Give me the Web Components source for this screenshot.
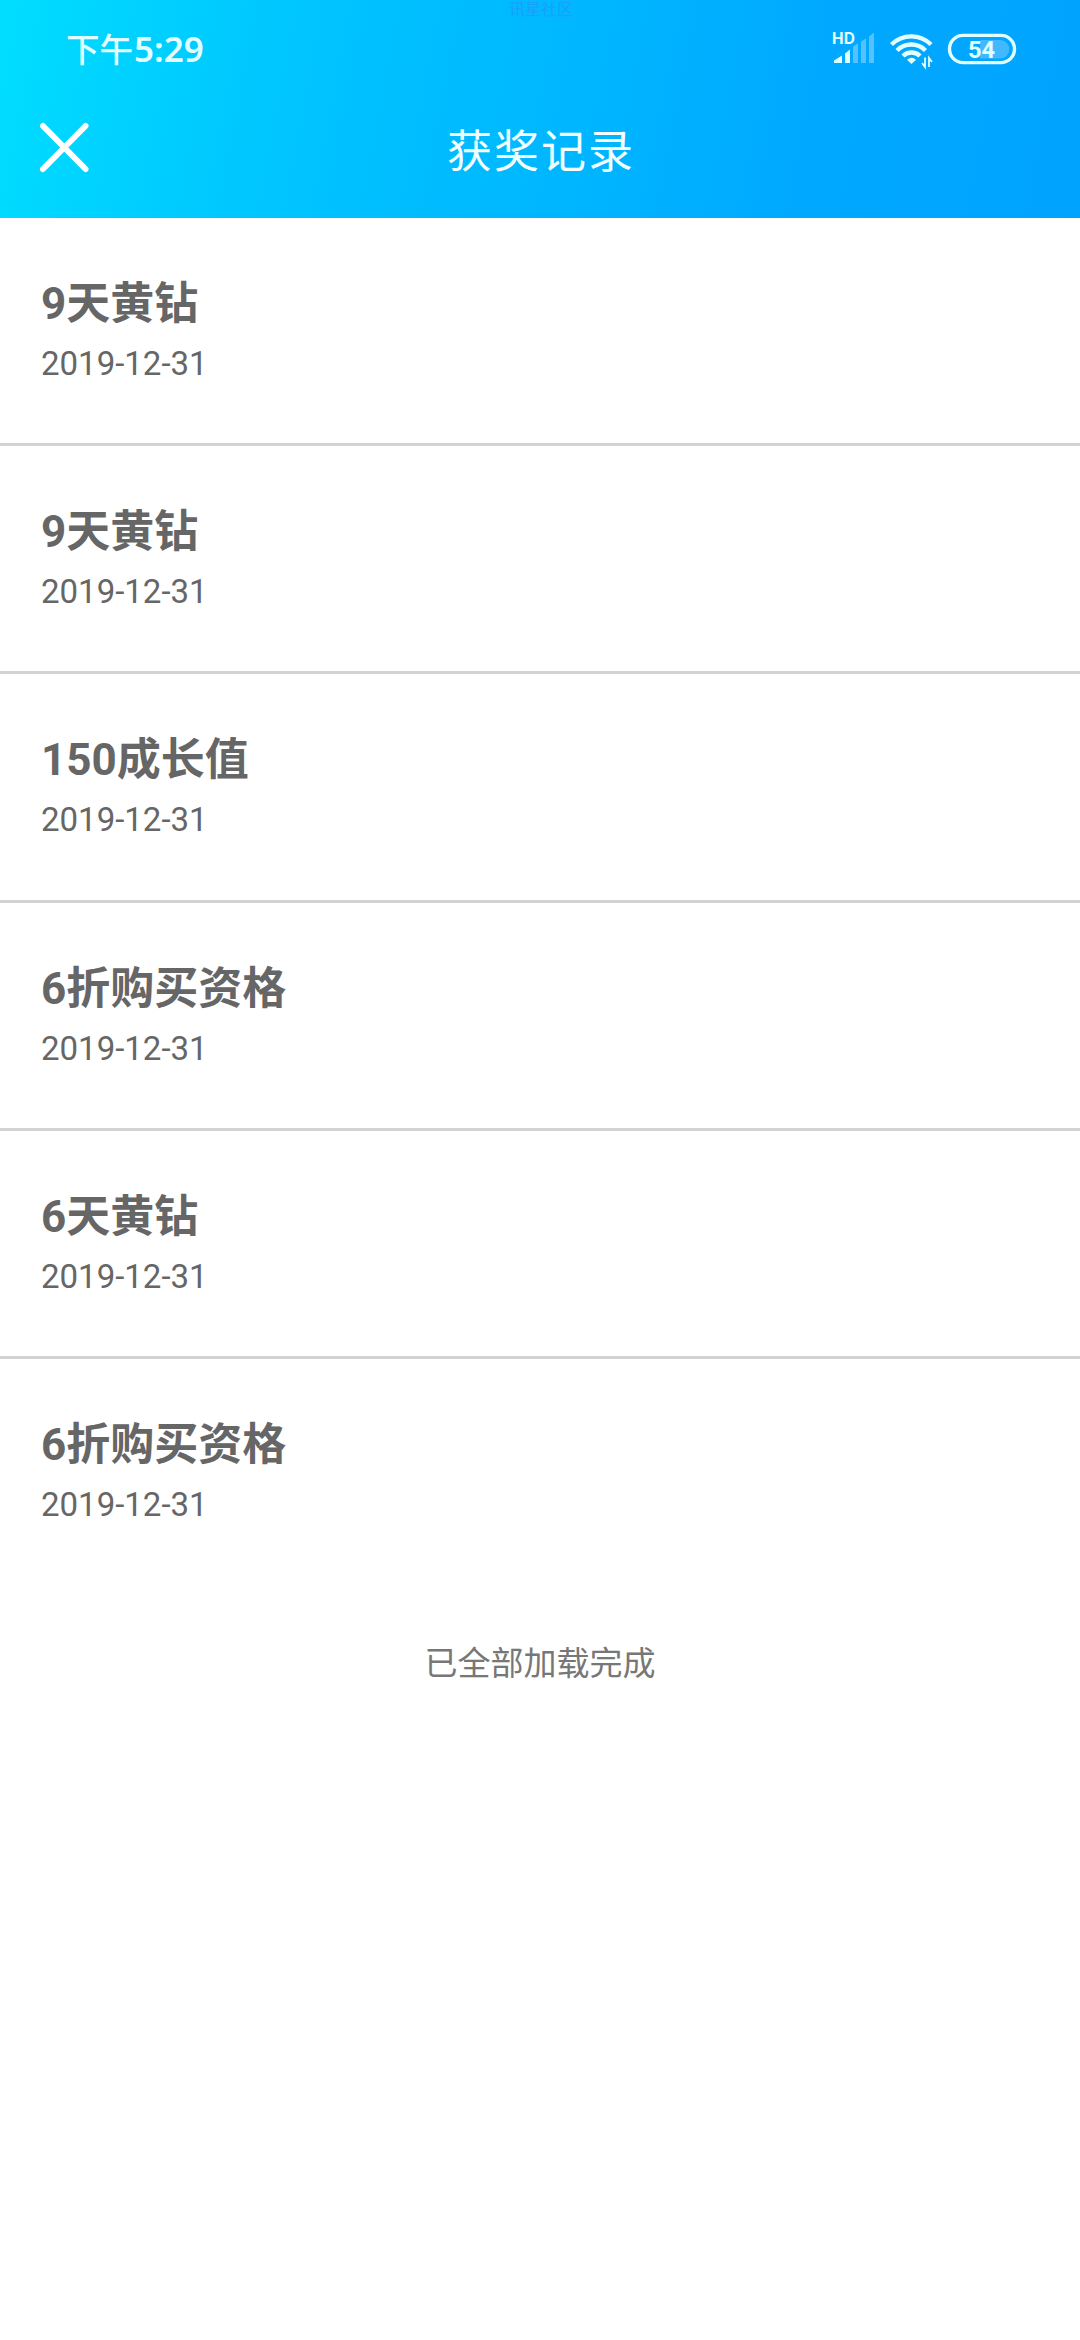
<!DOCTYPE html>
<html lang="zh-CN"><head><meta charset="utf-8"><title>获奖记录</title>
<style>
html,body{margin:0;background:#fff}
body{width:1080px;min-height:2340px;font-family:Roboto,"Noto Sans CJK SC",sans-serif}
</style></head><body>
<award-page></award-page>
<script>
const define=(name,html)=>customElements.define(name,class extends HTMLElement{
  constructor(){super();this.attachShadow({mode:'open'}).innerHTML=html;}
});
define('status-bar',`<style>
:host{display:flex;height:98px;box-sizing:border-box;padding:0 62px 0 66px;align-items:center;justify-content:space-between;color:#e2ffff}
time{font:500 33.500px/40px "Noto Sans CJK SC",sans-serif;white-space:nowrap;margin-top:-1px}
time b{font:600 35px/40px "Noto Sans","Noto Sans CJK SC",sans-serif;margin-left:1px}
svg{display:block}
</style>
<time>下午<b>5:29</b></time>
<svg width="190" height="44" viewBox="828 27 190 44">
<text x="832" y="44" font-family="Inter,sans-serif" font-weight="700" font-size="15.5" fill="#e2ffff" textLength="23">HD</text>
<path d="M834 63v-2.500l8-5V63zM845 63v-9.500l5-4V63z" fill="#e2ffff"/>
<path d="M853 63V46.500l5-3V63zM861 63V41.500l5-3V63zM869 63V36.500l5-4V63z" fill="#55c2ff"/>
<g fill="none" stroke="#e2ffff" stroke-width="4.400"><path d="M891.500 44.500a28 28 0 0 1 39.500 0M897 50.500a20 20 0 0 1 28.500 0M903 56a12 12 0 0 1 17 0"/></g>
<path d="M911.500 64l-4.500-4.200q4.500-4 9 0z" fill="#e2ffff"/>
<path d="M925 57.500V67l-3-4M929 67V58l3 4" fill="none" stroke="#e2ffff" stroke-width="1.800"/>
<path d="M980 40h20a9.300 9.300 0 0 1 0 18.600h-20z" fill="#42b9ff"/>
<rect x="949.500" y="35.400" width="65" height="27.200" rx="13.600" fill="none" stroke="#e2ffff" stroke-width="3.400"/>
<text x="981.500" y="58" text-anchor="middle" font-family="Roboto,sans-serif" font-weight="700" font-size="24.500" fill="#e2ffff" textLength="27" lengthAdjust="spacingAndGlyphs">54</text>
</svg>`);
define('nav-bar',`<style>
:host{display:grid;grid-template-columns:130px 1fr 130px;height:120px;align-items:center}
svg{display:block;margin:-23px 0 0 36px}
h1{margin:-18px 0 0;text-align:center;font:400 45px/60px "Noto Sans CJK SC",sans-serif;letter-spacing:2px;padding-left:2px;color:#f2ffff}
</style>
<svg width="56" height="56" viewBox="36 119 56 56"><path d="M43 126l42.500 43M85.500 126L43 169" stroke="#fff" stroke-width="6" stroke-linecap="round"/></svg>
<h1><slot></slot></h1>`);
define('app-header',`<style>
:host{display:block;position:relative;height:218px;background:linear-gradient(101deg,#00deff 0%,#00cfff 15%,#00c1ff 33%,#00b6ff 54%,#00a8ff 76%,#00a4ff 100%)}
.mark{position:absolute;left:509px;top:-1px;font:400 16px/18px "Noto Sans CJK SC",sans-serif;color:#18a0fa;white-space:nowrap}
</style><span class="mark">讯星社区</span><status-bar></status-bar><nav-bar>获奖记录</nav-bar>`);
define('award-item',`<style>
:host{display:flex;flex-direction:column;height:228.200px;box-sizing:border-box;padding:55px 41px 0;border-bottom:3px solid #d3d3d3;color:#666}
:host([last]){border-color:transparent}
.t{font-weight:700;font-size:44px;line-height:62px}
.d{font-size:33px;line-height:40px;margin-top:9px}
</style><div class="t"><slot></slot></div><div class="d"><slot name="date"></slot></div>`);
define('award-page',`<style>
:host{display:block}
footer{text-align:center;font-size:33px;line-height:48px;color:#777;margin-top:53px}
</style><app-header></app-header><main>${['9天黄钻','9天黄钻','150成长值','6折购买资格','6天黄钻','6折购买资格'].map((t,i)=>`<award-item${i===5?' last':''}>${t}<span slot="date">2019-12-31</span></award-item>`).join('')}</main><footer>已全部加载完成</footer>`);
</script></body></html>
